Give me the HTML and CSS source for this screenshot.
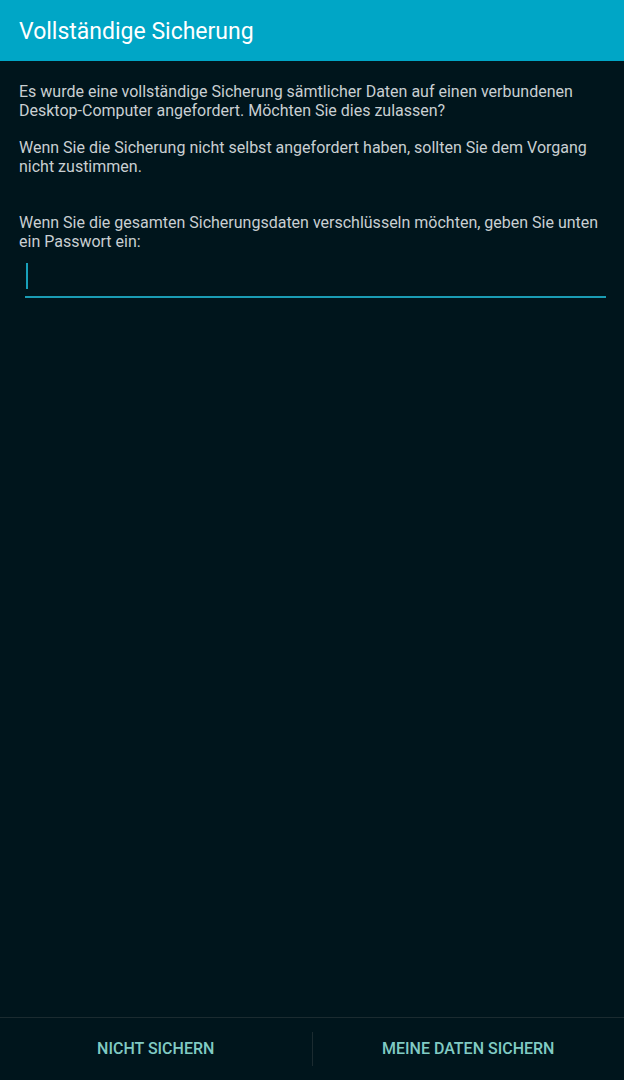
FILE: index.html
```html
<!DOCTYPE html>
<html lang="de">
<head>
<meta charset="utf-8">
<link rel="stylesheet" href="styles.css">
</head>
<body>
<div class="screen">
  <header class="appbar">
    <h1 class="title">Vollständige Sicherung</h1>
  </header>
  <main class="content">
    <p class="para">Es wurde eine vollständige Sicherung sämtlicher Daten auf einen verbundenen Desktop-Computer angefordert. Möchten Sie dies zulassen?</p>
    <p class="para">Wenn Sie die Sicherung nicht selbst angefordert haben, sollten Sie dem Vorgang nicht zustimmen.</p>
    <p class="para para-pw">Wenn Sie die gesamten Sicherungsdaten verschlüsseln möchten, geben Sie unten ein Passwort ein:</p>
    <div class="field"><span class="cursor"></span></div>
  </main>
  <footer class="buttons">
    <div class="btn">NICHT SICHERN</div>
    <div class="sep"></div>
    <div class="btn">MEINE DATEN SICHERN</div>
  </footer>
</div>
</body>
</html>
```
FILE: styles.css
```css
html, body {
  margin: 0;
  padding: 0;
  background: #00151c;
}
.screen {
  width: 624px;
  height: 1080px;
  display: flex;
  flex-direction: column;
  background: #00151c;
  font-family: Roboto, "Noto Sans", sans-serif;
}
.appbar {
  height: 61px;
  background: #00a6c6;
  display: flex;
  align-items: center;
  padding-left: 19px;
  flex-shrink: 0;
}
.title {
  margin: 0;
  font-size: 23px;
  font-weight: 400;
  color: #ffffff;
  line-height: 1;
  padding-top: 1px;
}
.content {
  flex: 1;
  padding: 21px 19px 0 19px;
}
.para {
  margin: 0 0 18px 0;
  font-size: 16px;
  line-height: 19px;
  color: #c9cfd2;
}
.para-pw {
  margin-top: 37px;
  margin-bottom: 0;
}
.field {
  margin: 12px -1px 0 6px;
  height: 33px;
  border-bottom: 2px solid #1a9cb4;
  display: flex;
  align-items: flex-start;
  padding-left: 1px;
}
.cursor {
  width: 2px;
  height: 26px;
  background: #18a0ba;
}
.buttons {
  height: 62px;
  border-top: 1px solid #1b2b30;
  display: flex;
  align-items: center;
  flex-shrink: 0;
}
.btn {
  flex: 1;
  text-align: center;
  font-size: 16px;
  font-weight: 500;
  color: #80cbc4;
  line-height: 1;
}
.sep {
  width: 1px;
  height: 34px;
  background: #1b2b30;
}
```
